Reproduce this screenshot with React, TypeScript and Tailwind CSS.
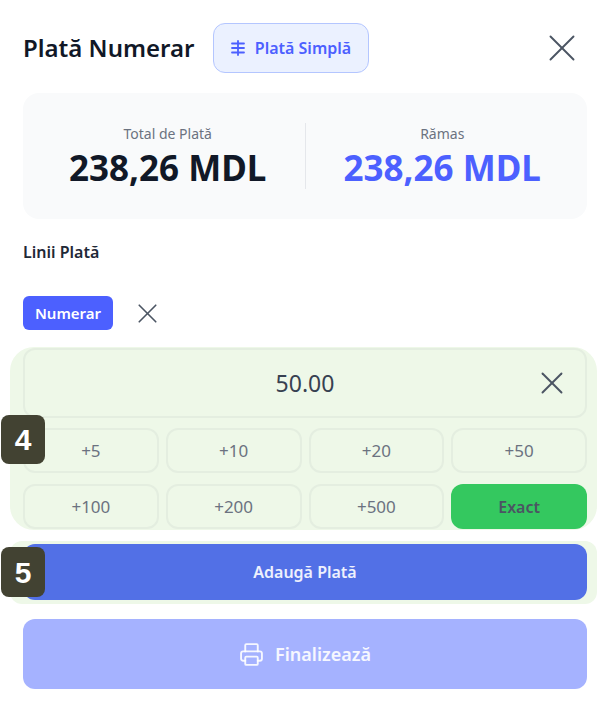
import { Printer, X } from "lucide-react";

const QUICK = ["+5", "+10", "+20", "+50", "+100", "+200", "+500"];

function Badge({ n, className }: { n: string; className: string }) {
  return (
    <div className={`absolute left-[-9px] w-[44px] flex items-center justify-center rounded-[8px] bg-[#424232] text-white text-[30px] font-bold font-['Liberation_Sans',sans-serif] ${className}`}>
      {n}
    </div>
  );
}

export default function App() {
  return (
    <div className="w-[604px] h-[714px] bg-white overflow-hidden font-['Noto_Sans',sans-serif] pt-[23px] pl-[23px] pr-[17px]">
      <div className="h-[50px] flex items-center">
        <h1 className="text-[24px] font-semibold text-[#111827] w-[190px] whitespace-nowrap">Plată Numerar</h1>
        <button className="h-[50px] w-[156px] flex items-center justify-center gap-[10px] rounded-[12px] border border-[#b4c6ff] bg-[#ebf1ff] text-[#4c60ff] text-[16px] font-semibold">
          <svg width="14" height="16" viewBox="0 0 14 16" fill="none" stroke="currentColor" strokeWidth="1.8" strokeLinecap="round">
            <path d="M7 1v14M1 3.5h12M1 8h12M1 12.5h12" />
          </svg>
          Plată Simplă
        </button>
        <button className="ml-auto mr-[2px] text-[#4b5563]">
          <X size={46} strokeWidth={1} />
        </button>
      </div>

      <div className="mt-[20px] h-[126px] px-[8px] rounded-[16px] bg-[#f9fafb] flex items-center">
        <div className="flex-1 text-center">
          <p className="text-[14px] leading-[20px] text-[#6b7280]">Total de Plată</p>
          <p className="mt-[3px] text-[35px] leading-[42px] font-bold text-[#111827]">238,26 MDL</p>
        </div>
        <div className="w-[1px] h-[66px] bg-[#e5e7eb]" />
        <div className="flex-1 text-center">
          <p className="text-[14px] leading-[20px] text-[#6b7280]">Rămas</p>
          <p className="mt-[3px] text-[35px] leading-[42px] font-bold text-[#4c60ff]">238,26 MDL</p>
        </div>
      </div>

      <p className="mt-[23px] text-[16px] leading-[20px] font-semibold text-[#1f2937]">Linii Plată</p>

      <div className="mt-[34px] flex items-center h-[34px]">
        <span className="w-[90px] h-[34px] flex items-center justify-center rounded-[6px] bg-[#4c60ff] text-white text-[15px] font-semibold">Numerar</span>
        <button className="ml-[18px] text-[#4b5563]">
          <X size={33} strokeWidth={1.2} />
        </button>
      </div>

      <div className="relative mt-[17px] -ml-[13px] -mr-[10px] pl-[13px] pr-[10px] pt-[1px] pb-[1px] h-[183px] rounded-[24px] bg-[#eef8e8]">
        <div className="relative h-[70px] rounded-[12px] border-2 border-[#e4eee0] flex items-center justify-center text-[23px] text-[#374151]">
          50.00
          <button className="absolute right-[14px] top-[14px] text-[#4b5563]">
            <X size={38} strokeWidth={1.2} />
          </button>
        </div>
        <div className="mt-[10px] grid grid-cols-4 gap-x-[7px] gap-y-[11px]">
          {QUICK.map((q) => (
            <button key={q} className="h-[45px] rounded-[12px] border-2 border-[#e4eee0] text-[17px] text-[#6b7280]">{q}</button>
          ))}
          <button className="h-[45px] rounded-[12px] bg-[#34c85f] text-[16px] font-semibold text-[#4b5563]">Exact</button>
        </div>
        <Badge n="4" className="top-[68px] h-[49px]" />
      </div>

      <div className="relative mt-[11px] -ml-[13px] -mr-[10px] pl-[13px] pr-[10px] py-[3px] h-[63px] rounded-[12px] bg-[#eef8e8]">
        <button className="w-full h-[56px] rounded-[12px] bg-[#5270e6] text-white/90 text-[16px] font-semibold">Adaugă Plată</button>
        <Badge n="5" className="top-[6px] h-[50px]" />
      </div>

      <button className="mt-[15px] w-full h-[70px] rounded-[12px] bg-[#a5b2ff] text-white/90 text-[18px] font-semibold flex items-center justify-center gap-[11px]">
        <Printer size={25} strokeWidth={1.8} />
        Finalizează
      </button>
    </div>
  );
}
